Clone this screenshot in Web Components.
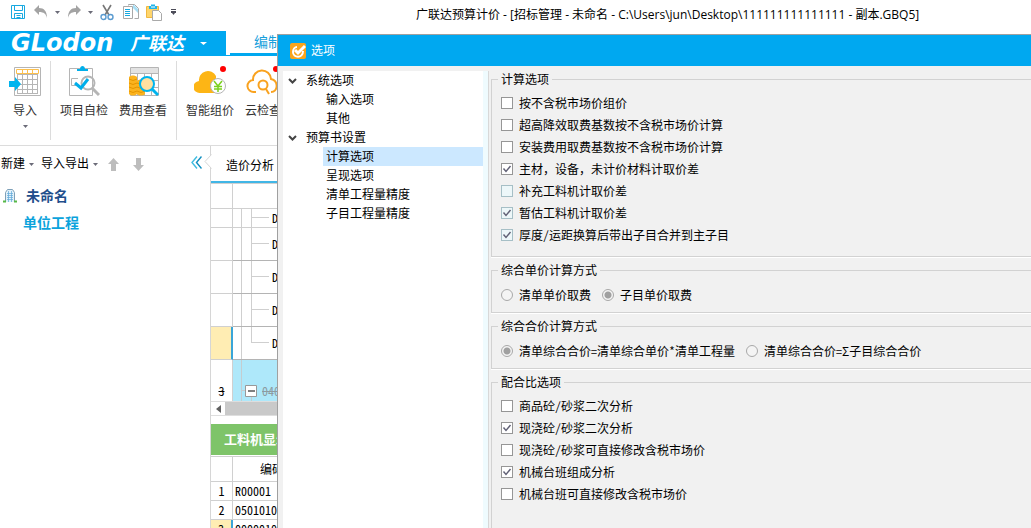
<!DOCTYPE html>
<html lang="zh-CN">
<head>
<meta charset="utf-8">
<title>广联达预算计价</title>
<style>
  html, body { height: 100%; margin: 0; }
  body { overflow: hidden; background: #fff; color: #000; font: 12px/16px "Open Sans", "Noto Sans CJK SC", sans-serif; }
</style>
</head>
<body>
<budget-app></budget-app>
<script>
const base = `<style>
  * { box-sizing: border-box; }
  :host { display: block; }
  button { appearance: none; border: 0; margin: 0; padding: 0; background: none; font: inherit; color: inherit; display: flex; align-items: center; white-space: nowrap; }
  svg { display: block; flex: none; }
</style>`;

function define(name, markup) {
  const t = document.createElement('template');
  t.innerHTML = base + markup;
  customElements.define(name, class extends HTMLElement {
    constructor() {
      super();
      this.attachShadow({ mode: 'open' }).append(t.content.cloneNode(true));
    }
  });
}

const caret = (w = 5, fill = '#6b6b78') =>
  `<svg width="${w}" height="3" viewBox="0 0 6 3" preserveAspectRatio="none" fill="${fill}"><path d="M0 0h6L3 3z"/></svg>`;

define('title-bar', `<style>
  :host { display: grid; grid-template-columns: 416px 1fr; align-items: center; height: 31px; padding-bottom: 1px; }
  .tools { display: flex; align-items: center; padding: 0 0 6px 10px; }
  .tools button { height: 20px; }
  .undo { margin-left: 8px; } .drop { margin: 0 7px; } .copy { margin-left: 9px; } .paste { margin-left: 7px; } .more { margin-left: 9px; }
  h1 { margin: 0; font: inherit; white-space: nowrap; }
</style>
<div class="tools">
  <button aria-label="保存"><svg width="16" height="16" fill="none" stroke="#18a9e0"><path d="M1.500 1.500h13v13h-13z"/><path d="M4.500 1.500v5h8v-5M4.500 14.500v-5h8v5M6.500 11.500h4M6.500 13.500h4"/></svg></button>
  <button class="undo" aria-label="撤销"><svg width="14" height="14" fill="#a3a3a3"><path d="M5 0v3c5 0 8 3 8 10-1-4-3-6-8-6v3L0 5z"/></svg></button>
  <button class="drop" aria-label="撤销列表">${caret()}</button>
  <button aria-label="恢复"><svg width="14" height="14" fill="#a3a3a3"><path d="M9 0v3c-5 0-8 3-8 10 1-4 3-6 8-6v3l5-5z"/></svg></button>
  <button class="drop" aria-label="恢复列表">${caret()}</button>
  <button aria-label="剪切"><svg width="14" height="17" fill="none"><path d="M3 1l6 10M11 1L5 11" stroke="#777" stroke-width="1.600"/><circle cx="3.500" cy="13" r="2.500" stroke="#5b9bd0" stroke-width="1.400"/><circle cx="10.500" cy="13" r="2.500" stroke="#5b9bd0" stroke-width="1.400"/></svg></button>
  <button class="copy" aria-label="复制"><svg width="16" height="16" fill="#fff" stroke="#a9a9a9"><path d="M5.500 1.500V.5h6l4 4v10h-4"/><path d="M.5 2.500h9v12h-9z"/><path d="M2 5.500h5M2 7.500h5M2 9.500h5M2 11.500h5" stroke="#18a9e0"/><path d="M10 4l5 5V5l-4-4h-1z" fill="#a8dff5" stroke="none"/></svg></button>
  <button class="paste" aria-label="粘贴"><svg width="16" height="17"><path d="M.5 2.500h12v11H.5z" fill="#ffd56b" stroke="#f0b840"/><path d="M3 5V2h2V.5h4V2h2v3z" fill="#20b4ea"/><path d="M5 3h4" stroke="#fff"/><path d="M6.500 6.500h6l3 3v7h-9z" fill="#fff" stroke="#a9a9a9"/></svg></button>
  <button class="more" aria-label="更多"><svg width="5" height="7" fill="#4c4c58"><path d="M0 0h5v1H0zM0 2h5v2H4L2.500 6 1 4H0z"/></svg></button>
</div>
<h1>广联达预算计价 - [招标管理 - 未命名 - C:\\Users\\jun\\Desktop\\111111111111111 - 副本.GBQ5]</h1>`);

define('ribbon-tabs', `<style>
  :host { display: flex; height: 25px; border-bottom: 1px solid #00a8f0; }
  .brand { width: 226px; background: #00a8f0; color: #fff; padding-left: 11px; }
  .en { width: 119px; font: italic bold 24px/24px "DejaVu Sans", sans-serif; text-align: left; }
  .cn { font: italic bold 18px/22px "Noto Sans CJK SC", sans-serif; width: 70px; padding-bottom: 2px; text-align: left; }
  nav { flex: 1; margin-left: 4px; border-bottom: 2px solid #00a8f0; padding-left: 24px; display: flex; align-items: center; }
  a { color: #18a0dc; text-decoration: none; font-size: 14px; line-height: 20px; }
</style>
<button class="brand"><span class="en">GLodon</span><span class="cn">广联达</span>${caret(7, '#fff')}</button>
<nav><a href="#edit">编制</a></nav>`);

define('ribbon-group', `<style>
  :host { display: flex; padding-top: 8px; position: relative; }
  :host([divided]) { border-right: 1px solid #dcdcdc; }
</style><slot></slot>`);

define('ribbon-button', `<style>
  :host { color: #333; }
  button { flex-direction: column; gap: 6px; }
  ::slotted(svg) { display: block; }
</style><button><slot name="icon"></slot><slot></slot></button>`);

define('ribbon-bar', `<style>
  :host { display: flex; height: 90px; border-bottom: 1px solid #dcdcdc; overflow: hidden; padding-top: 5px; }
  ribbon-group { height: 79px; flex: none; padding-top: 4px; }
  .a { width: 51px; padding-left: 8px; }
  .b { width: 126px; padding-left: 9px; gap: 11px; }
  .c { padding-left: 9px; gap: 11px; }
</style>
<ribbon-group class="a" divided><ribbon-button>
  <svg slot="icon" width="34" height="32" fill="none"><path d="M6.500 2.500h26v28h-26z" stroke="#b5b5b5" fill="#fff"/><path d="M9 9.500h21M9 14.500h21M9 19.500h21M9 24.500h21M9.500 9v19M14.500 9v19M19.500 9v19M24.500 9v19M29.500 9v19M9 28.500h21" stroke="#b5b5b5"/><path d="M8.500 8.500v-4h22v4zM14.500 4v4M19.500 4v4M24.500 4v4" stroke="#fdc04c"/><path d="M1 16h6v-4l6 7-6 7v-4H1z" fill="#00b4ee"/></svg>
  导入<svg width="5" height="3" fill="#6b6b78"><path d="M0 0h5L2.500 3z"/></svg></ribbon-button></ribbon-group>
<ribbon-group class="b" divided>
  <ribbon-button><svg slot="icon" width="32" height="32" fill="none"><path d="M1.500 3.500h23v27h-23z" stroke="#b5b5b5"/><path d="M9 6V4h3c0-4 5-4 5 0h3v2z" fill="#00aeea"/><path d="M10 13.500H3.500v7H9" stroke="#b5b5b5"/><circle cx="20" cy="18" r="6.500" stroke="#b5b5b5" stroke-width="2"/><path d="M24 23l7 7" stroke="#b5b5b5" stroke-width="3"/><path d="M7 18l6 5 7-9" stroke="#00aeea" stroke-width="3"/></svg>项目自检</ribbon-button>
  <ribbon-button><svg slot="icon" width="32" height="32" fill="none"><path d="M3.500 2.500h28v28h-28z" stroke="#b5b5b5" fill="#fff"/><path d="M4 3h27v5H4z" fill="#e2e2e2"/><path d="M3 8.500h28M3 15.500h28M3 22.500h28M10.500 8v22M17.500 8v22M24.500 8v22" stroke="#b5b5b5"/><path d="M2 12c2-2 6-2 8 0v17c-2 2-6 2-8 0zM10 16c2-2 6-2 8 0v13c-2 2-6 2-8 0z" fill="#fbb31e"/><path d="M2 14q4 3 8 0M2 18q4 3 8 0M2 22q4 3 8 0M2 26q4 3 8 0M10 18q4 3 8 0M10 22q4 3 8 0M10 26q4 3 8 0" stroke="#e59600"/><circle cx="20" cy="19" r="7" fill="#ffe0a0" stroke="#00b4ee" stroke-width="2"/><path d="M25 24l6 6" stroke="#00b4ee" stroke-width="3"/></svg>费用查看</ribbon-button>
</ribbon-group>
<ribbon-group class="c">
  <ribbon-button><svg slot="icon" width="32" height="32"><path d="M6 28a6 6 0 0 1-1-12 9 9 0 0 1 17-5v17z" fill="#fdb515"/><circle cx="24" cy="21" r="7.500" fill="#fff" stroke="#b5b5b5"/><path d="M20 16l4 5 4-5M20 21.500h8M20 24h8M24 21v6" fill="none" stroke="#7ad11f" stroke-width="1.500"/><circle cx="29" cy="4" r="3" fill="#f00"/></svg>智能组价</ribbon-button>
  <ribbon-button><svg slot="icon" width="36" height="32" fill="none"><path d="M11 27H9a6 6 0 0 1-1-12 9 9 0 0 1 18-1c8 2 7 13 0 13" stroke="#f9a21f" stroke-width="2"/><circle cx="18" cy="20" r="4.500" stroke="#f9a21f" stroke-width="2"/><path d="M21 24l3 5" stroke="#f9a21f" stroke-width="2"/><circle cx="31" cy="4" r="3" fill="#f00"/></svg>云检查</ribbon-button>
</ribbon-group>`);

define('project-panel', `<style>
  :host { width: 210px; flex: none; padding-top: 8px; }
  .bar { display: flex; align-items: center; height: 20px; padding-left: 1px; }
  .bar button { gap: 4px; }
  .io { margin-left: 7px; } .up { margin-left: 10px; } .down { margin-left: 14px; } .fold { margin: 0 8px 4px auto; }
  ul { list-style: none; margin: 8px 0 0; padding: 0; font-size: 14px; font-weight: bold; }
  li { display: flex; align-items: center; height: 27px; gap: 9px; padding-left: 3px; color: #1f4e8c; }
  li.child { padding-left: 23px; color: #0ba3dc; }
</style>
<div class="bar">
  <button>新建 ${caret()}</button>
  <button class="io">导入导出 ${caret()}</button>
  <button class="up" aria-label="上移"><svg width="11" height="13" fill="#bdbdbd"><path d="M5.500 0L11 6H8v7H3V6H0z"/></svg></button>
  <button class="down" aria-label="下移"><svg width="11" height="13" fill="#bdbdbd"><path d="M5.500 13L11 7H8V0H3v7H0z"/></svg></button>
  <button class="fold" aria-label="收起"><svg width="11" height="13" fill="none" stroke-width="1.400"><path d="M6 .5l-5 6 5 6" stroke="#40bce0"/><path d="M10.500.5l-5 6 5 6" stroke="#128fc0"/></svg></button>
</div>
<ul>
  <li><svg width="14" height="14" fill="none"><path d="M2.500 13V3.500l2-3h5l2 3V13" stroke="#7ea0b8" fill="#e2f1fa"/><path d="M4 4.500h6M4 6.500h6M4 8.500h6M4 10.500h6M5.500 2v11M8.500 2v11" stroke="#5fa8d8" stroke-width=".7"/><path d="M0 12.500h3M11 12.500h3" stroke="#58b947" stroke-width="2"/></svg>未命名</li>
  <li class="child">单位工程</li>
</ul>`);

define('cost-sheet', `<style>
  :host { flex: 1; min-width: 0; border-left: 1px solid #d6d6d6; position: relative; }
  .tab { height: 37px; border-bottom: 2px solid #41b6e6; padding: 4px 0 0 15px; display: flex; align-items: center; }
  .tab a { color: #000; text-decoration: none; }
  .notch { position: absolute; left: -7px; top: 8px; }
  table { border-spacing: 0; width: 100%; table-layout: fixed; font-family: "Noto Sans CJK SC", sans-serif; font-feature-settings: "hwid"; }
  col.n { width: 22px; }
  th, td { padding: 0; font-weight: normal; text-align: left; border-bottom: 1px solid #b4b4b4; white-space: nowrap; height: 33px; line-height: 16px; }
  tr > :first-child { text-align: center; border-right: 1px solid #d0d0d0; border-bottom-color: #d0d0d0; }
  .tree { border-top: 1px solid #d0d0d0; }
  .head > * { height: 25px; border-color: #d0d0d0; }
  .low > * { height: 19px; border-color: #d0d0d0; }
  .cell { display: flex; align-items: center; height: 32px; }
  .low .cell { height: 18px; }
  .cell svg { margin-right: 3px; height: 100%; }
  .on > :first-child { background: #ffedb3; border-right: 2px solid #3aa5d8; }
  .total > * { height: 41px; border-bottom: 0; vertical-align: bottom; }
  .total .cell { height: 41px; background: #aee8fa; align-items: flex-end; color: #8d9ba1; }
  .total .cell svg { margin-right: 5px; }
  s { line-height: 20px; }
  .scroll { display: flex; align-items: center; height: 15px; background: #c9c9c9; border: solid #dedede; border-width: 1px 0; }
  .scroll button { width: 14px; height: 13px; background: #fff; justify-content: center; }
  h2 { margin: 8px 0 1px; height: 31px; padding-left: 13px; background: #7ec469; color: #fff; font-size: 13px; line-height: 31px; }
  .list { border-top: 1px solid #d0d0d0; }
  .list td + td { padding-left: 2px; } .list th + th { padding-left: 27px; }
</style>
<svg class="notch" width="8" height="16" fill="#fff" stroke="#d6d6d6"><path d="M7.500.5L1 7.500l6.500 7"/></svg>
<div class="tab"><a href="#analysis">造价分析</a></div>
<table class="tree"><colgroup><col class="n"><col></colgroup>
  <tr class="head"><th></th><th></th></tr>
  <tr class="low"><td></td><td><div class="cell"><svg width="36" height="18" stroke="#cfcfcf"><path d="M8.500 0v18M18.500 0v18M19 8.500h17"/></svg>D</div></td></tr>
  <tr><td></td><td><div class="cell"><svg width="36" height="32" stroke="#cfcfcf"><path d="M8.500 0v32M18.500 0v32M19 15.500h17"/></svg>D</div></td></tr>
  <tr><td></td><td><div class="cell"><svg width="36" height="32" stroke="#cfcfcf"><path d="M8.500 0v32M18.500 0v32M19 15.500h17"/></svg>D</div></td></tr>
  <tr><td></td><td><div class="cell"><svg width="36" height="32" stroke="#cfcfcf"><path d="M8.500 0v32M18.500 0v32M19 15.500h17"/></svg>D</div></td></tr>
  <tr class="on"><td></td><td><div class="cell"><svg width="36" height="32" stroke="#cfcfcf"><path d="M8.500 0v32M18.500 0v15.500M18 15.500h18"/></svg>D</div></td></tr>
  <tr class="total"><td><s>3</s></td><td><div class="cell"><svg width="24" height="41" stroke="#c4cdd0"><path d="M8.500 0v41M9 30.500h4M18.500 36v5"/><path d="M12.500 25.500h11v11h-11z" fill="#fff" stroke="#999"/><path d="M15 31h7" stroke="#000"/></svg><s>040</s></div></td></tr>
</table>
<div class="scroll"><button aria-label="向左滚动"><svg width="5" height="8" fill="#606060"><path d="M5 0v8L0 4z"/></svg></button></div>
<h2>工料机显示</h2>
<table class="list"><colgroup><col class="n"><col></colgroup>
  <tr class="head"><th></th><th>编码</th></tr>
  <tr class="low"><td>1</td><td>R00001</td></tr>
  <tr class="low"><td>2</td><td>0501010</td></tr>
  <tr class="low on"><td>3</td><td>0000010</td></tr>
</table>`);

define('option-tree', `<style>
  :host { width: 200px; flex: none; background: #fff; }
  ul { list-style: none; margin: 0; padding: 0; }
  li > span { display: flex; align-items: center; height: 19px; gap: 9px; padding-left: 5px; }
  ul ul span { margin-left: 40px; padding-left: 3px; }
  [aria-selected] > span { background: #cce8ff; }
</style>
<ul role="tree">
  <li role="treeitem"><span><svg width="9" height="6" fill="none" stroke="#444" stroke-width="2"><path d="M1 1l3.500 3.500L8 1"/></svg>系统选项</span>
    <ul role="group"><li role="treeitem"><span>输入选项</span></li><li role="treeitem"><span>其他</span></li></ul></li>
  <li role="treeitem"><span><svg width="9" height="6" fill="none" stroke="#444" stroke-width="2"><path d="M1 1l3.500 3.500L8 1"/></svg>预算书设置</span>
    <ul role="group"><li role="treeitem" aria-selected="true"><span>计算选项</span></li><li role="treeitem"><span>呈现选项</span></li><li role="treeitem"><span>清单工程量精度</span></li><li role="treeitem"><span>子目工程量精度</span></li></ul></li>
</ul>`);

define('option-group', `<style>
  fieldset { margin: 0; min-width: 0; border: 1px solid #d2d2d2; border-right: 0; padding: 5px 9px 10px; box-shadow: 0 1px #fff; }
  :host([row]) fieldset { padding: 6px 9px; display: flex; gap: 11px; }
  :host([fill]) { display: flex; flex-direction: column; flex: 1; }
  :host([fill]) fieldset { flex: 1; border-bottom: 0; }
  legend { height: 16px; line-height: 16px; margin-left: -3px; padding: 0 3px; }
  ::slotted(*) { display: block; }
</style><fieldset><legend><slot name="legend"></slot></legend><slot></slot></fieldset>`);

/* One tick box or radio with its label; attributes: type, name, checked, tinted. */
customElements.define('option-item', class extends HTMLElement {
  constructor() {
    super();
    const type = this.getAttribute('type') || 'checkbox';
    this.attachShadow({ mode: 'open' }).innerHTML = base + `<style>
      label { display: flex; align-items: center; gap: 6px; height: 22px; white-space: nowrap; }
      input { appearance: none; margin: 0; width: 12px; height: 12px; border: 1px solid #969696; background: #fff; flex: none; }
      input[type=radio] { border-radius: 50%; border-color: #a8a8a8; background: #f4f4f4; }
      input[type=radio]:checked { background: radial-gradient(circle, #a0a0a0 3px, #f4f4f4 4px); }
      :host([tinted]) input { background-color: #edf7f9; border-color: #a6bfc6; }
      input[type=checkbox]:checked { background-image: url("data:image/svg+xml,%3Csvg xmlns='http://www.w3.org/2000/svg' width='10' height='10'%3E%3Cpath d='M1.500 4.500l2.500 3 4.500-5.500' fill='none' stroke='%23606075' stroke-width='1.400'/%3E%3C/svg%3E"); }
    </style><label><input type="${type}" ${this.hasAttribute('checked') ? 'checked' : ''}><span><slot></slot></span></label>`;
  }
});

define('options-dialog', `<style>
  :host { display: flex; flex-direction: column; background: #f1f1f1; border: 1px solid #a0a0a0; border-width: 1px 0 0 1px; overflow: hidden; }
  header { height: 31px; flex: none; background: #00a8f0; color: #fff; display: flex; align-items: center; gap: 5px; padding-left: 12px; }
  .body { flex: 1; min-height: 0; display: flex; padding: 5px 0 0 5px; }
  .split { width: 6px; flex: none; background: #effbfe; border-right: 1px solid #d8d8d8; }
  .pane { flex: 1; min-width: 0; padding-left: 2px; display: flex; flex-direction: column; gap: 5px; font-family: "Noto Sans CJK SC", sans-serif; font-feature-settings: "hwid"; }
  option-group { flex: none; }
  option-group[fill] { flex: 1; }
  .wide { font-feature-settings: normal; }
</style>
<header><svg width="16" height="16"><rect width="16" height="16" rx="2" fill="#f9a51c"/><path d="M13 8c0 8-10 7-10 1 0-3 2-5 4-5" fill="none" stroke="#fff" stroke-width="2"/><path d="M5 7l3 3 7-7" fill="none" stroke="#fff" stroke-width="3"/></svg>选项</header>
<div class="body">
  <option-tree></option-tree><div class="split"></div>
  <div class="pane">
    <option-group><span slot="legend">计算选项</span>
      <option-item>按不含税市场价组价</option-item>
      <option-item>超高降效取费基数按不含税市场价计算</option-item>
      <option-item>安装费用取费基数按不含税市场价计算</option-item>
      <option-item class="wide" checked>主材，设备，未计价材料计取价差</option-item>
      <option-item tinted>补充工料机计取价差</option-item>
      <option-item tinted checked>暂估工料机计取价差</option-item>
      <option-item tinted checked>厚度/运距换算后带出子目合并到主子目</option-item>
    </option-group>
    <option-group row><span slot="legend">综合单价计算方式</span>
      <option-item type="radio">清单单价取费</option-item>
      <option-item type="radio" checked>子目单价取费</option-item>
    </option-group>
    <option-group row><span slot="legend">综合合价计算方式</span>
      <option-item type="radio" checked>清单综合合价=清单综合单价*清单工程量</option-item>
      <option-item type="radio">清单综合合价=Σ子目综合合价</option-item>
    </option-group>
    <option-group fill><span slot="legend">配合比选项</span>
      <option-item>商品砼/砂浆二次分析</option-item>
      <option-item checked>现浇砼/砂浆二次分析</option-item>
      <option-item>现浇砼/砂浆可直接修改含税市场价</option-item>
      <option-item checked>机械台班组成分析</option-item>
      <option-item>机械台班可直接修改含税市场价</option-item>
    </option-group>
  </div>
</div>`);

define('budget-app', `<style>
  :host { display: flex; flex-direction: column; height: 100vh; position: relative; overflow: hidden; }
  title-bar, ribbon-tabs, ribbon-bar { flex: none; }
  main { flex: 1; min-height: 0; display: flex; }
  options-dialog { position: absolute; left: 277px; top: 34px; right: 0; bottom: 0; }
</style>
<title-bar></title-bar>
<ribbon-tabs></ribbon-tabs>
<ribbon-bar></ribbon-bar>
<main><project-panel></project-panel><cost-sheet></cost-sheet></main>
<options-dialog></options-dialog>`);
</script>
</body>
</html>
